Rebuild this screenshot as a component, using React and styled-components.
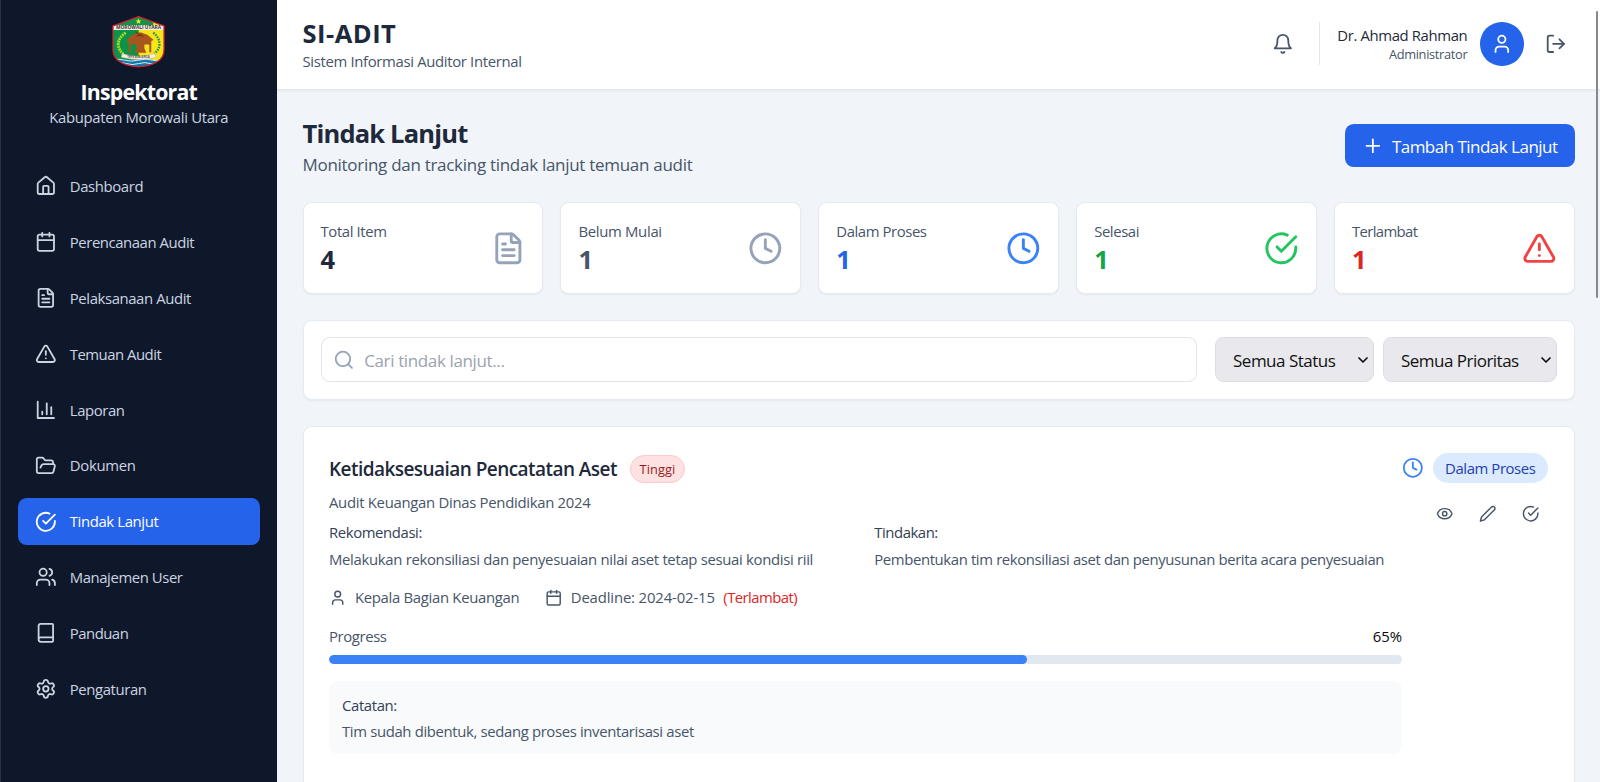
import React from "react";
import styled, { createGlobalStyle } from "styled-components";
import {
  House, Calendar, FileText, TriangleAlert, FolderOpen, Users, Book, Settings,
  User, LogOut, Plus, Clock, Search, Eye, ChevronDown,
} from "lucide-react";

const GlobalStyle = createGlobalStyle`
  *, *::before, *::after { box-sizing: border-box; }
  html, body { margin: 0; padding: 0; overflow: hidden; }
  body { font-family: "Open Sans", "Noto Sans", sans-serif; color: #1e293b; background: #f1f5f9; }
  h1, h2, h3, p { margin: 0; }
`;

/* ---------- icons ---------- */

const Glyph = ({ size = 24, strokeWidth = 2, children }) => (
  <svg width={size} height={size} viewBox="0 0 24 24" fill="none" stroke="currentColor"
    strokeWidth={strokeWidth} strokeLinecap="round" strokeLinejoin="round">{children}</svg>
);
const CheckCircle = (p) => (
  <Glyph {...p}><path d="M22 11.08V12a10 10 0 1 1-5.93-9.14" /><path d="m9 11 3 3L22 4" /></Glyph>
);
const BarChart = (p) => (
  <Glyph {...p}><path d="M3 3v18h18" /><path d="M18 17V9" /><path d="M13 17V5" /><path d="M8 17v-3" /></Glyph>
);
const Bell = (p) => (
  <Glyph {...p}><path d="M6 8a6 6 0 0 1 12 0c0 7 3 9 3 9H3s3-2 3-9" /><path d="M10.3 21a1.94 1.94 0 0 0 3.4 0" /></Glyph>
);
const Pen = (p) => (
  <Glyph {...p}><path d="M17 3a2.85 2.83 0 1 1 4 4L7.5 20.5 2 22l1.5-5.5Z" /></Glyph>
);

const Crest = () => (
  <svg width="53" height="53" viewBox="0 0 54 54">
    <defs>
      <clipPath id="shield">
        <path d="M27 1.600 53 11.200V36c0 9-9 16-26 16.800C10 52 1 45 1 36V11.200Z" />
      </clipPath>
    </defs>
    <g clipPath="url(#shield)">
      <rect width="27" height="54" fill="#0d9347" />
      <rect x="27" width="27" height="54" fill="#f7e51b" />
      <path d="M27 0 42 8v3H12V8Z" fill="#129447" />
      <rect y="10.300" width="54" height="5" fill="#f4eee9" />
      <path d="M0 45.500Q7 43.500 13 45.500T27 45.500T41 45.500T54 45.500V54H0Z" fill="#1377ad" />
      <path d="M0 46Q7 44 13 46T27 46T41 46T54 46M4 49.500Q10 47.500 15 49.500T27 49.500T39 49.500T50 49.500" fill="none" stroke="#d6eff5" strokeWidth="1" />
    </g>
    <path d="m27 3.600.8 1.900 2.100.1-1.600 1.400.5 2-1.800-1.100-1.800 1.100.5-2-1.600-1.400 2.100-.1Z" fill="#fbe92a" />
    <text x="27" y="14.500" textAnchor="middle" fontSize="4.600" fontWeight="700" fill="#3c3430" textLength="46" lengthAdjust="spacingAndGlyphs">MOROWALI UTARA</text>
    <path d="M14 18Q5.500 24 6.500 31 7.500 37 12 40" fill="none" stroke="#a9d92d" strokeWidth="3" strokeDasharray="2 .7" />
    <path d="M42 18Q48.500 23 48.300 30 48 36 43 39" fill="none" stroke="#2a9448" strokeWidth="2.400" strokeDasharray="1.700 1" />
    <path d="M14.500 26 21 19.800 29 17.500 36 20 42.500 25.500 40 26.500V38H38V30H33V34L35 38.500H23L25 34V30H19V38H17V27Z" fill="#a9551e" />
    <path d="M25 21.500 31 20.500M24 17.500 32 22" stroke="#6b3111" strokeWidth="1" />
    <path d="M10.500 39.500Q27 44.500 43.500 39.500L45 43Q27 47.500 9.500 43Z" fill="#f7f1e9" stroke="#c8b39b" strokeWidth=".5" />
    <text x="27" y="44.300" textAnchor="middle" fontSize="3" fontWeight="700" fill="#65584e" textLength="23" lengthAdjust="spacingAndGlyphs">TEPE ASA AROA</text>
    <path d="M27 1.600 53 11.200V36c0 9-9 16-26 16.800C10 52 1 45 1 36V11.200Z" fill="none" stroke="#d3202f" strokeWidth="1.300" />
  </svg>
);

/* ---------- shared text ---------- */

const Text = styled.span`
  display: block;
  white-space: nowrap;
  padding-top: ${(p) => p.$drop || 0}px;
  font-size: ${(p) => p.$size || 14.9}px;
  line-height: ${(p) => p.$line || 21.7}px;
  font-weight: ${(p) => p.$weight || 400};
  letter-spacing: ${(p) => p.$track || 0}px;
  color: ${(p) => p.$color || "#475569"};
`;

/* ---------- shell ---------- */

const Shell = styled.div`
  display: flex;
  width: 100%;
  height: 782px;
  overflow: hidden;
`;
const Sidebar = styled.aside`
  flex: 0 0 276.5px;
  background: #0f172a;
  border-left: 1px solid #2b3346;
`;
const Brand = styled.div`
  display: flex;
  flex-direction: column;
  align-items: center;
  height: 162.600px;
  padding: 14.600px 0 0 0;
  svg { display: block; margin-bottom: 9.500px; }
`;
const Nav = styled.nav`
  display: flex;
  flex-direction: column;
  gap: 8.900px;
  padding: 0 17px 0 17px;
`;
const NavItem = styled.a`
  display: flex;
  align-items: center;
  gap: 12.700px;
  height: 47px;
  padding: 0 17.400px;
  border-radius: 8.700px;
  color: ${(p) => (p.$active ? "#ffffff" : "#cbd5e1")};
  background: ${(p) => (p.$active ? "#2563eb" : "transparent")};
`;

const Content = styled.div`
  flex: 1;
  min-width: 0;
  display: flex;
  flex-direction: column;
`;
const Header = styled.header`
  display: flex;
  justify-content: space-between;
  flex: 0 0 89.500px;
  padding: 16px 33px 0 26px;
  background: #ffffff;
  border-bottom: 1px solid #e2e8f0;
  box-shadow: 0 1px 2px rgba(0, 0, 0, 0.06);
  z-index: 1;
`;
const Account = styled.div`
  display: flex;
  align-items: center;
  height: 55.600px;
  color: #475569;
`;
const Profile = styled.div`
  display: flex;
  align-items: center;
  gap: 13px;
  height: 43px;
  margin: 0 21.500px 0 26px;
  padding-left: 17px;
  border-left: 1px solid #e2e8f0;
`;
const Names = styled.div`
  display: flex;
  flex-direction: column;
  align-items: flex-end;
`;
const Avatar = styled.div`
  display: flex;
  align-items: center;
  justify-content: center;
  width: 43.500px;
  height: 43.500px;
  border-radius: 50%;
  background: #2563eb;
  color: #ffffff;
`;

const Main = styled.main`
  display: flex;
  flex-direction: column;
  padding: 26.200px 25.500px 0 26px;
`;
const PageHead = styled.div`
  display: flex;
  justify-content: space-between;
  height: 86px;
  p { margin-top: 1.500px; }
`;
const AddButton = styled.button`
  display: flex;
  align-items: center;
  gap: 8.700px;
  width: 230px;
  height: 43px;
  margin-top: 8.300px;
  padding: 0 0 0 17px;
  border: 0;
  border-radius: 8.700px;
  background: #2563eb;
  color: #ffffff;
  font-family: inherit;
`;

const Card = styled.section`
  background: #ffffff;
  border: 1px solid #e5eaf1;
  border-radius: 8.700px;
  box-shadow: 0 1px 2px rgba(0, 0, 0, 0.05);
`;
const Stats = styled.div`
  display: grid;
  grid-template-columns: repeat(5, 1fr);
  gap: 17.400px;
`;
const StatCard = styled(Card)`
  display: flex;
  align-items: center;
  justify-content: space-between;
  height: 92px;
  padding: 1.500px 16.800px 0 17px;
`;
const StatIcon = styled.div`
  display: flex;
  color: ${(p) => p.$color};
`;

const Filters = styled(Card)`
  display: flex;
  align-items: center;
  gap: 8.700px;
  height: 80.600px;
  margin: 26px 0 26px;
  padding: 0 17px;
`;
const SearchBox = styled.div`
  display: flex;
  align-items: center;
  gap: 9.500px;
  flex: 1;
  height: 45px;
  margin-right: 8.700px;
  padding: 0 11.500px;
  border: 1px solid #dfe4eb;
  border-radius: 8.700px;
  color: #94a3b8;
`;
const Select = styled.button`
  display: flex;
  align-items: center;
  justify-content: space-between;
  width: ${(p) => p.$width}px;
  height: 45px;
  padding: 0 1.500px 0 17.500px;
  border: 1px solid #d8dde5;
  border-radius: 8.700px;
  background: #e9e9ed;
  color: #111111;
  font-family: inherit;
`;

const Item = styled(Card)`
  display: flex;
  justify-content: space-between;
  height: 420px;
  padding: 25.700px 25.500px 0;
`;
const Detail = styled.div`
  width: 1073.500px;
`;
const TitleRow = styled.div`
  display: flex;
  align-items: center;
  gap: 13px;
  height: 32px;
  margin-bottom: 7.400px;
`;
const Priority = styled.span`
  display: flex;
  align-items: center;
  justify-content: center;
  width: 55px;
  height: 27.500px;
  border: 1px solid #fecaca;
  border-radius: 14px;
  background: #fee2e2;
`;
const Pair = styled.div`
  display: grid;
  grid-template-columns: 1fr 1fr;
  gap: 17.400px;
  margin: 8.300px 0 17px;
  & > div > span + span { margin-top: 4.500px; }
`;
const Meta = styled.div`
  display: flex;
  align-items: center;
  gap: 25.500px;
  margin-bottom: 16.600px;
  color: #475569;
`;
const MetaItem = styled.div`
  display: flex;
  align-items: center;
  gap: 8.500px;
`;
const ProgressHead = styled.div`
  display: flex;
  justify-content: space-between;
`;
const Track = styled.div`
  height: 8.700px;
  margin: 7.600px 0 17.400px;
  border-radius: 5px;
  background: #e2e8f0;
  overflow: hidden;
`;
const Fill = styled.div`
  height: 100%;
  border-radius: 5px;
  background: #3b82f6;
`;
const Note = styled.div`
  height: 73px;
  padding: 13.700px 13px;
  border-radius: 8.700px;
  background: #f8fafc;
  span + span { margin-top: 4.300px; }
`;
const Side = styled.div`
  display: flex;
  flex-direction: column;
  align-items: flex-end;
`;
const StatusRow = styled.div`
  display: flex;
  align-items: center;
  gap: 8.700px;
  color: #3b82f6;
`;
const StatusPill = styled.span`
  display: flex;
  align-items: center;
  justify-content: center;
  width: 115.500px;
  height: 30px;
  border-radius: 15px;
  background: #dbeafe;
`;
const Actions = styled.div`
  display: flex;
  gap: 25.800px;
  margin: 21.900px 8.400px 0 0;
  color: #475569;
`;
const Caret = styled(ChevronDown)`
  margin: 1px 0 0 0;
`;
const ScrollThumb = styled.div`
  position: absolute;
  top: 11px;
  right: 2.500px;
  width: 2px;
  height: 287px;
  border-radius: 1px;
  background: #85888c;
  z-index: 2;
`;

/* ---------- data ---------- */

const nav = [
  [House, "Dashboard", -0.38], [Calendar, "Perencanaan Audit", -0.43], [FileText, "Pelaksanaan Audit", -0.4],
  [TriangleAlert, "Temuan Audit", -0.5], [BarChart, "Laporan", -0.4], [FolderOpen, "Dokumen", -0.32],
  [CheckCircle, "Tindak Lanjut", -0.38], [Users, "Manajemen User", -0.43], [Book, "Panduan", -0.5],
  [Settings, "Pengaturan", -0.4],
];
const stats = [
  ["Total Item", 4, "#1e293b", FileText, "#94a3b8", -0.39],
  ["Belum Mulai", 1, "#475569", Clock, "#94a3b8", -0.31],
  ["Dalam Proses", 1, "#2563eb", Clock, "#3b82f6", -0.42],
  ["Selesai", 1, "#16a34a", CheckCircle, "#22c55e", -0.4],
  ["Terlambat", 1, "#dc2626", TriangleAlert, "#ef4444", -0.65],
];

export default function App() {
  return (
    <Shell>
      <GlobalStyle />
      <Sidebar>
        <Brand>
          <Crest />
          <Text as="h2" $size={21.3} $line={30.2} $weight={700} $track={-0.79} $color="#fff">Inspektorat</Text>
          <Text $track={-0.33} $color="#cbd5e1">Kabupaten Morowali Utara</Text>
        </Brand>
        <Nav>
          {nav.map(([Icon, label, track]) => (
            <NavItem key={label} $active={label === "Tindak Lanjut"}>
              <Icon size={21.7} />
              <Text $drop={1.5} $track={track} $color="inherit">{label}</Text>
            </NavItem>
          ))}
        </Nav>
      </Sidebar>

      <Content>
        <Header>
          <div>
            <Text as="h1" $size={25.5} $line={34.7} $weight={700} $track={0.5} $color="#1e293b">SI-ADIT</Text>
            <Text as="p" $track={-0.34}>Sistem Informasi Auditor Internal</Text>
          </div>
          <Account>
            <Bell size={21.7} />
            <Profile>
              <Names>
                <Text $drop={1} $line={21} $track={-0.38} $color="#1e293b">Dr. Ahmad Rahman</Text>
                <Text $size={12.8} $line={17.4} $track={-0.32}>Administrator</Text>
              </Names>
              <Avatar><User size={21.7} /></Avatar>
            </Profile>
            <LogOut size={21.7} />
          </Account>
        </Header>

        <Main>
          <PageHead>
            <div>
              <Text as="h2" $size={25.5} $line={34.7} $weight={700} $track={-0.81} $color="#1e293b">Tindak Lanjut</Text>
              <Text as="p" $size={17} $line={26} $track={-0.29}>Monitoring dan tracking tindak lanjut temuan audit</Text>
            </div>
            <AddButton>
              <Plus size={21.7} />
              <Text $drop={3} $size={17} $line={26} $track={-0.52} $color="#fff">Tambah Tindak Lanjut</Text>
            </AddButton>
          </PageHead>

          <Stats>
            {stats.map(([label, value, color, Icon, iconColor, track]) => (
              <StatCard key={label}>
                <div>
                  <Text $track={track}>{label}</Text>
                  <Text $size={25.5} $line={33} $weight={700} $color={color}>{value}</Text>
                </div>
                <StatIcon $color={iconColor}><Icon size={34.7} /></StatIcon>
              </StatCard>
            ))}
          </Stats>

          <Filters>
            <SearchBox>
              <Search size={21.7} />
              <Text $drop={3} $size={17} $line={26} $track={-0.37} $color="#9ca3af">Cari tindak lanjut...</Text>
            </SearchBox>
            <Select $width={159.3}>
              <Text $drop={3} $size={17} $line={26} $track={-0.5} $color="inherit">Semua Status</Text>
              <Caret size={16} strokeWidth={2.6} />
            </Select>
            <Select $width={174}>
              <Text $drop={3} $size={17} $line={26} $track={-0.52} $color="inherit">Semua Prioritas</Text>
              <Caret size={16} strokeWidth={2.6} />
            </Select>
          </Filters>

          <Item>
            <Detail>
              <TitleRow>
                <Text as="h3" $size={19} $line={30} $weight={600} $track={-0.55} $color="#1e293b">Ketidaksesuaian Pencatatan Aset</Text>
                <Priority><Text $drop={1} $size={12.8} $line={17.4} $track={0.1} $color="#991b1b">Tinggi</Text></Priority>
              </TitleRow>
              <Text $track={-0.3}>Audit Keuangan Dinas Pendidikan 2024</Text>
              <Pair>
                <div>
                  <Text $track={-0.4} $color="#334155">Rekomendasi:</Text>
                  <Text $track={-0.32}>Melakukan rekonsiliasi dan penyesuaian nilai aset tetap sesuai kondisi riil</Text>
                </div>
                <div>
                  <Text $track={-0.45} $color="#334155">Tindakan:</Text>
                  <Text $track={-0.38}>Pembentukan tim rekonsiliasi aset dan penyusunan berita acara penyesuaian</Text>
                </div>
              </Pair>
              <Meta>
                <MetaItem>
                  <User size={17.4} />
                  <Text $track={-0.31}>Kepala Bagian Keuangan</Text>
                </MetaItem>
                <MetaItem>
                  <Calendar size={17.4} />
                  <Text $track={-0.15}>Deadline: 2024-02-15</Text>
                  <Text $track={-0.56} $color="#dc2626">(Terlambat)</Text>
                </MetaItem>
              </Meta>
              <ProgressHead>
                <Text $track={-0.4}>Progress</Text>
                <Text $color="#0a0a0a">65%</Text>
              </ProgressHead>
              <Track><Fill style={{ width: "65%" }} /></Track>
              <Note>
                <Text $track={-0.38} $color="#334155">Catatan:</Text>
                <Text $track={-0.36}>Tim sudah dibentuk, sedang proses inventarisasi aset</Text>
              </Note>
            </Detail>
            <Side>
              <StatusRow>
                <Clock size={21.7} />
                <StatusPill><Text $drop={2} $track={-0.42} $color="#1e40af">Dalam Proses</Text></StatusPill>
              </StatusRow>
              <Actions>
                <Eye size={17.4} />
                <Pen size={17.4} />
                <CheckCircle size={17.4} />
              </Actions>
            </Side>
          </Item>
        </Main>
      </Content>
      <ScrollThumb />
    </Shell>
  );
}
